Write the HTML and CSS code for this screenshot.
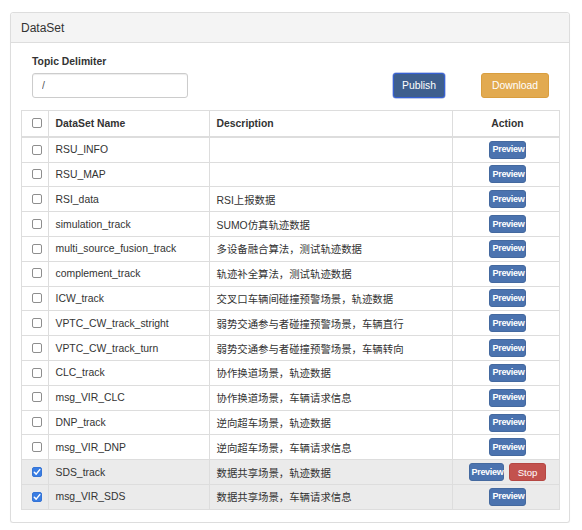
FILE: index.html
```html
<!DOCTYPE html>
<html>
<head>
<meta charset="utf-8">
<link rel="stylesheet" href="styles.css">
</head>
<body>
<div class="page">
  <div class="panel">
    <div class="panel-heading">DataSet</div>
    <div class="panel-body">
      <div class="toolbar">
        <div class="form-group">
          <label class="field-label">Topic Delimiter</label>
          <input class="field-input" type="text" value="/">
        </div>
        <button class="btn btn-publish">Publish</button>
        <button class="btn btn-download">Download</button>
      </div>
      <table class="table">
        <colgroup>
          <col class="c-check"><col class="c-name"><col class="c-desc"><col class="c-action">
        </colgroup>
        <thead>
          <tr>
            <th class="cell-check"><span class="cb"></span></th>
            <th>DataSet Name</th>
            <th>Description</th>
            <th class="cell-action">Action</th>
          </tr>
        </thead>
        <tbody>
          <tr><td class="cell-check"><span class="cb"></span></td><td>RSU_INFO</td><td></td><td class="cell-action"><button class="xbtn xbtn-preview">Preview</button></td></tr>
          <tr><td class="cell-check"><span class="cb"></span></td><td>RSU_MAP</td><td></td><td class="cell-action"><button class="xbtn xbtn-preview">Preview</button></td></tr>
          <tr><td class="cell-check"><span class="cb"></span></td><td>RSI_data</td><td>RSI上报数据</td><td class="cell-action"><button class="xbtn xbtn-preview">Preview</button></td></tr>
          <tr><td class="cell-check"><span class="cb"></span></td><td>simulation_track</td><td>SUMO仿真轨迹数据</td><td class="cell-action"><button class="xbtn xbtn-preview">Preview</button></td></tr>
          <tr><td class="cell-check"><span class="cb"></span></td><td>multi_source_fusion_track</td><td>多设备融合算法，测试轨迹数据</td><td class="cell-action"><button class="xbtn xbtn-preview">Preview</button></td></tr>
          <tr><td class="cell-check"><span class="cb"></span></td><td>complement_track</td><td>轨迹补全算法，测试轨迹数据</td><td class="cell-action"><button class="xbtn xbtn-preview">Preview</button></td></tr>
          <tr><td class="cell-check"><span class="cb"></span></td><td>ICW_track</td><td>交叉口车辆间碰撞预警场景，轨迹数据</td><td class="cell-action"><button class="xbtn xbtn-preview">Preview</button></td></tr>
          <tr><td class="cell-check"><span class="cb"></span></td><td>VPTC_CW_track_stright</td><td>弱势交通参与者碰撞预警场景，车辆直行</td><td class="cell-action"><button class="xbtn xbtn-preview">Preview</button></td></tr>
          <tr><td class="cell-check"><span class="cb"></span></td><td>VPTC_CW_track_turn</td><td>弱势交通参与者碰撞预警场景，车辆转向</td><td class="cell-action"><button class="xbtn xbtn-preview">Preview</button></td></tr>
          <tr><td class="cell-check"><span class="cb"></span></td><td>CLC_track</td><td>协作换道场景，轨迹数据</td><td class="cell-action"><button class="xbtn xbtn-preview">Preview</button></td></tr>
          <tr><td class="cell-check"><span class="cb"></span></td><td>msg_VIR_CLC</td><td>协作换道场景，车辆请求信息</td><td class="cell-action"><button class="xbtn xbtn-preview">Preview</button></td></tr>
          <tr><td class="cell-check"><span class="cb"></span></td><td>DNP_track</td><td>逆向超车场景，轨迹数据</td><td class="cell-action"><button class="xbtn xbtn-preview">Preview</button></td></tr>
          <tr><td class="cell-check"><span class="cb"></span></td><td>msg_VIR_DNP</td><td>逆向超车场景，车辆请求信息</td><td class="cell-action"><button class="xbtn xbtn-preview">Preview</button></td></tr>
          <tr class="active"><td class="cell-check"><span class="cb checked"><svg viewBox="0 0 10 10" width="10" height="10"><path d="M2.3 5.2 L4.2 7.1 L7.8 2.6" fill="none" stroke="#fff" stroke-width="1.5" stroke-linecap="round" stroke-linejoin="round"/></svg></span></td><td>SDS_track</td><td>数据共享场景，轨迹数据</td><td class="cell-action"><button class="xbtn xbtn-preview xbtn-narrow">Preview</button><button class="xbtn xbtn-stop">Stop</button></td></tr>
          <tr class="active"><td class="cell-check"><span class="cb checked"><svg viewBox="0 0 10 10" width="10" height="10"><path d="M2.3 5.2 L4.2 7.1 L7.8 2.6" fill="none" stroke="#fff" stroke-width="1.5" stroke-linecap="round" stroke-linejoin="round"/></svg></span></td><td>msg_VIR_SDS</td><td>数据共享场景，车辆请求信息</td><td class="cell-action"><button class="xbtn xbtn-preview">Preview</button></td></tr>
        </tbody>
      </table>
    </div>
  </div>
</div>
</body>
</html>
```
FILE: styles.css
```css
* { box-sizing: border-box; }
html, body { margin: 0; padding: 0; background: #fff; }
body {
  font-family: "Liberation Sans", "Noto Sans CJK SC", sans-serif;
  font-size: 10.4px;
  color: #333;
}
.page { padding: 12px 12px 0 10px; }
.panel {
  border: 1px solid #ddd;
  border-radius: 3px;
  background: #fff;
  box-shadow: 0 1px 1px rgba(0,0,0,0.05);
}
.panel-heading {
  background: #f4f4f4;
  border-bottom: 1px solid #ddd;
  border-radius: 3px 3px 0 0;
  padding: 8.5px 10px 7.5px;
  font-size: 12px;
  line-height: 1.1;
  color: #333;
}
.panel-body { padding: 11px 10px 12px 10px; }
.toolbar {
  display: flex;
  align-items: flex-end;
  margin-bottom: 11.5px;
}
.form-group {
  display: flex;
  flex-direction: column;
  margin-left: 11px;
}
.field-label {
  font-weight: bold;
  font-size: 10.4px;
  line-height: 15px;
  margin-bottom: 4px;
  color: #333;
}
.field-input {
  width: 156px;
  height: 25px;
  border: 1px solid #ccc;
  border-radius: 3px;
  padding: 0 9px;
  font-family: "Liberation Sans", sans-serif;
  font-size: 10.4px;
  color: #555;
  box-shadow: inset 0 1px 1px rgba(0,0,0,0.075);
  outline: none;
}
.btn {
  font-family: "Liberation Sans", sans-serif;
  font-size: 10.4px;
  height: 25px;
  color: #fff;
  border-radius: 3px;
  border: 1px solid transparent;
  padding: 0 9px;
  margin-bottom: 0.5px;
  cursor: pointer;
}
.btn-publish {
  margin-left: auto;
  background: #3e5f8e;
  border-color: #3660d4;
  box-shadow: 0 0 0 0.5px #7d96d8;
  width: 52px;
  padding: 0;
}
.btn-download {
  margin-left: 36px;
  margin-right: 10px;
  background: #e2aa50;
  border-color: #d99e3f;
  width: 68px;
  padding: 0;
}
.table {
  width: 100%;
  border-collapse: collapse;
  table-layout: fixed;
  border: 1px solid #ddd;
}
.c-check { width: 27px; }
.c-name { width: 161px; }
.c-desc { width: 243px; }
.c-action { width: 107px; }
.table th, .table td {
  border: 1px solid #ddd;
  padding: 0 6.5px;
  vertical-align: middle;
  text-align: left;
  white-space: nowrap;
  overflow: hidden;
}
.table th {
  font-weight: bold;
  border-bottom: 2px solid #ddd;
}
.table thead tr { height: 27px; }
.table tbody tr { height: 24.82px; }
.table tr.active td { background: #ebebeb; }
.table .cell-check { padding: 0 0 0 9.5px; }
.table .cell-action { text-align: center; padding: 0 4px 0 7px; }
.cb {
  display: inline-block;
  width: 10px;
  height: 10px;
  border: 1px solid #8e8e8e;
  border-radius: 2px;
  background: #fff;
  vertical-align: middle;
  margin-top: -2px;
  position: relative;
}
.cb.checked {
  background: #3a7de2;
  border-color: #3574d6;
}
.cb svg { position: absolute; left: -1px; top: -1px; }
.xbtn {
  font-family: "Liberation Sans", sans-serif;
  color: #fff;
  height: 18px;
  border-radius: 3px;
  border: 1px solid transparent;
  vertical-align: middle;
  cursor: pointer;
  line-height: 15px;
}
.xbtn-preview {
  background: #4b73af;
  border-color: #44699f;
  font-size: 9px;
  font-weight: bold;
  letter-spacing: -0.3px;
  padding: 0 2px 0 2.5px;
  width: 37px;
}
.xbtn-narrow { width: 35px; padding: 0 1px 0 1.5px; }
.xbtn-stop {
  background: #c3524e;
  border-color: #b54743;
  font-size: 9.6px;
  width: 37px;
  padding: 0;
  margin-left: 5px;
}
```
